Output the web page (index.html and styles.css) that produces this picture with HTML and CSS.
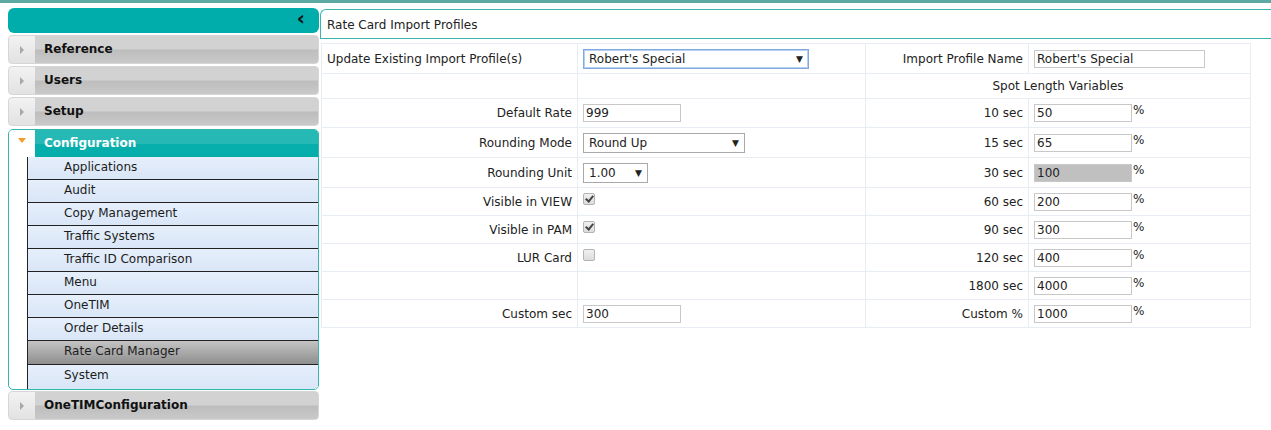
FILE: index.html
```html
<!DOCTYPE html>
<html lang="en">
<head>
  <meta charset="UTF-8" />
  <title>Rate Card Import Profiles</title>
  <link rel="stylesheet" href="styles.css">
</head>
<body>
  <div class="topbar"></div>

  <div class="layout">
    <div class="sidebar">
      <div class="collapse-bar"><span class="collapse-arrow">&lsaquo;</span></div>

      <div class="acc-head"><span class="acc-icon"><span class="tri-right"></span></span><span class="acc-title">Reference</span></div>
      <div class="acc-head"><span class="acc-icon"><span class="tri-right"></span></span><span class="acc-title">Users</span></div>
      <div class="acc-head"><span class="acc-icon"><span class="tri-right"></span></span><span class="acc-title">Setup</span></div>

      <div class="acc-open">
        <div class="acc-head active"><span class="acc-icon"><span class="tri-down"></span></span><span class="acc-title">Configuration</span></div>
        <ul class="sub-menu">
          <li>Applications</li>
          <li>Audit</li>
          <li>Copy Management</li>
          <li>Traffic Systems</li>
          <li>Traffic ID Comparison</li>
          <li>Menu</li>
          <li>OneTIM</li>
          <li>Order Details</li>
          <li class="selected">Rate Card Manager</li>
          <li>System</li>
        </ul>
      </div>

      <div class="acc-head"><span class="acc-icon"><span class="tri-right"></span></span><span class="acc-title">OneTIMConfiguration</span></div>
    </div>

    <div class="main">
      <div class="panel-title">Rate Card Import Profiles</div>

      <table class="form-table">
        <colgroup>
          <col class="c1"><col class="c2"><col class="c3"><col class="c4">
        </colgroup>
        <tr class="r-first">
          <td class="lbl-left">Update Existing Import Profile(s)</td>
          <td><div class="fake-select wide focus">Robert's Special<span class="arr">&#9660;</span></div></td>
          <td class="lbl">Import Profile Name</td>
          <td><input class="txt name" type="text" value="Robert's Special"></td>
        </tr>
        <tr class="r-spot">
          <td></td>
          <td></td>
          <td colspan="2" class="center">Spot Length Variables</td>
        </tr>
        <tr class="r29">
          <td class="lbl">Default Rate</td>
          <td><input class="txt" type="text" value="999"></td>
          <td class="lbl">10 sec</td>
          <td><input class="txt" type="text" value="50"><sup>%</sup></td>
        </tr>
        <tr class="r30">
          <td class="lbl">Rounding Mode</td>
          <td><div class="fake-select mode">Round Up<span class="arr">&#9660;</span></div></td>
          <td class="lbl">15 sec</td>
          <td><input class="txt" type="text" value="65"><sup>%</sup></td>
        </tr>
        <tr class="r30">
          <td class="lbl">Rounding Unit</td>
          <td><div class="fake-select unit">1.00<span class="arr">&#9660;</span></div></td>
          <td class="lbl">30 sec</td>
          <td><input class="txt locked" type="text" value="100" readonly><sup>%</sup></td>
        </tr>
        <tr>
          <td class="lbl">Visible in VIEW</td>
          <td><span class="chk on"></span></td>
          <td class="lbl">60 sec</td>
          <td><input class="txt" type="text" value="200"><sup>%</sup></td>
        </tr>
        <tr>
          <td class="lbl">Visible in PAM</td>
          <td><span class="chk on"></span></td>
          <td class="lbl">90 sec</td>
          <td><input class="txt" type="text" value="300"><sup>%</sup></td>
        </tr>
        <tr>
          <td class="lbl">LUR Card</td>
          <td><span class="chk"></span></td>
          <td class="lbl">120 sec</td>
          <td><input class="txt" type="text" value="400"><sup>%</sup></td>
        </tr>
        <tr>
          <td></td>
          <td></td>
          <td class="lbl">1800 sec</td>
          <td><input class="txt" type="text" value="4000"><sup>%</sup></td>
        </tr>
        <tr>
          <td class="lbl">Custom sec</td>
          <td><input class="txt" type="text" value="300"></td>
          <td class="lbl">Custom %</td>
          <td><input class="txt" type="text" value="1000"><sup>%</sup></td>
        </tr>
      </table>
    </div>
  </div>
</body>
</html>
```

FILE: styles.css
```css
body {
  margin: 0;
  font-family: "DejaVu Sans", Verdana, sans-serif;
  font-size: 12px;
  color: #222;
  background: #fff;
}
.topbar {
  height: 3px;
  background: #5fa9a5;
}
.layout {
  display: flex;
  align-items: flex-start;
  padding-top: 5px;
}

/* ---- sidebar ---- */
.sidebar {
  width: 311px;
  margin-left: 8px;
  flex: none;
}
.collapse-bar {
  height: 25px;
  background: #00adab;
  border-radius: 6px;
  display: flex;
  justify-content: flex-end;
  align-items: center;
  padding-right: 14px;
  margin-bottom: 2px;
}
.collapse-arrow {
  font-weight: bold;
  font-size: 20px;
  line-height: 1;
  color: #111;
  margin-top: -6px;
}
.acc-head {
  display: flex;
  height: 27px;
  border: 1px solid #d6d6d6;
  border-radius: 4px;
  overflow: hidden;
  margin-bottom: 2px;
  background: linear-gradient(#d2d2d2 0%, #d2d2d2 48%, #bdbdbd 52%, #c9c9c9 100%);
}
.acc-icon {
  width: 26px;
  flex: none;
  display: flex;
  align-items: center;
  justify-content: center;
  background: linear-gradient(#f2f2f2, #e2e2e2);
}
.tri-right {
  width: 0;
  height: 0;
  border-top: 4px solid transparent;
  border-bottom: 4px solid transparent;
  border-left: 4px solid #a8a8a8;
}
.tri-down {
  width: 0;
  height: 0;
  border-left: 4px solid transparent;
  border-right: 4px solid transparent;
  border-top: 5px solid #f59a2b;
  margin-top: -6px;
}
.acc-title {
  font-weight: bold;
  font-size: 12px;
  padding-left: 9px;
  line-height: 27px;
  color: #111;
}

.acc-open {
  border: 1px solid #33b5b0;
  border-radius: 5px;
  overflow: hidden;
  margin-top: 3px;
  margin-bottom: 1px;
}
.acc-head.active {
  border: none;
  border-radius: 0;
  margin-bottom: 0;
  height: 27px;
  background: linear-gradient(#26b8b4 0%, #26b8b4 50%, #05aeab 54%, #05aeab 100%);
}
.acc-head.active .acc-icon {
  background: #fff;
}
.acc-head.active .acc-title {
  color: #fff;
  line-height: 26px;
}
.sub-menu {
  list-style: none;
  margin: 0 0 0 18px;
  padding: 0;
  border-left: 1px solid #222;
}
.sub-menu li {
  height: 22px;
  line-height: 21px;
  padding-left: 36px;
  border-bottom: 1px solid #222;
  background: linear-gradient(#e6effb, #d9e6f7);
  font-size: 12px;
  color: #1c1c1c;
}
.sub-menu li:last-child {
  border-bottom: none;
  height: 24px;
}
.sub-menu li.selected {
  background: linear-gradient(#c4c4c4, #8e8e8e);
  height: 23px;
}

/* ---- main ---- */
.main {
  flex: 1;
  margin-left: 1px;
}
.panel-title {
  height: 28px;
  line-height: 30px;
  border: 1px solid #3bb4ae;
  border-right: none;
  border-radius: 6px 0 0 0;
  padding-left: 6px;
  margin-top: 1px;
  font-size: 12px;
}
.form-table {
  border-collapse: collapse;
  margin-top: 4px;
  margin-left: 1px;
  width: 929px;
  table-layout: fixed;
}
.c1 { width: 256px; }
.c2 { width: 288px; }
.c3 { width: 163px; }
.c4 { width: 222px; }
.form-table td {
  border: 1px solid #e7edf3;
  height: 27px;
  padding: 0 5px;
  vertical-align: middle;
  white-space: nowrap;
}
.form-table tr.r-first td { height: 29px; }
.form-table tr.r-spot td { height: 24px; }
.form-table tr.r29 td { height: 28px; }
.form-table tr.r30 td { height: 29px; }
.lbl { text-align: right; }
.lbl-left { text-align: left; }
.center { text-align: center; }

.txt {
  font-family: inherit;
  font-size: 12px;
  width: 98px;
  height: 18px;
  box-sizing: border-box;
  border: 1px solid #c8c8c8;
  padding: 0 2px;
  color: #222;
  vertical-align: middle;
}
.txt.name { width: 171px; }
.txt.locked { background: #c0c0c0; border-color: #c8c8c8; }
sup {
  font-size: 12px;
  vertical-align: top;
  line-height: 12px;
  margin-left: 1px;
}
.fake-select {
  display: inline-flex;
  justify-content: space-between;
  align-items: center;
  box-sizing: border-box;
  height: 20px;
  border: 1px solid #a9a9a9;
  padding: 0 5px;
  font-size: 12px;
  vertical-align: middle;
  background: #fff;
}
.fake-select .arr { font-size: 9px; color: #222; }
.fake-select.wide { width: 226px; }
.fake-select.focus { border-color: #7ea9e2; box-shadow: 0 0 0 1px #b7cff0 inset; }
.fake-select.mode { width: 162px; }
.fake-select.unit { width: 65px; }

.chk {
  display: inline-block;
  width: 12px;
  height: 12px;
  box-sizing: border-box;
  border: 1px solid #b4b4b4;
  border-radius: 2px;
  background: linear-gradient(#f0f0f0, #dcdcdc);
  vertical-align: middle;
  position: relative;
  margin-top: -6px;
}
.chk.on::after {
  content: "";
  position: absolute;
  left: 3px;
  top: 0px;
  width: 3px;
  height: 6px;
  border: solid #444;
  border-width: 0 2px 2px 0;
  transform: rotate(40deg);
}
```
